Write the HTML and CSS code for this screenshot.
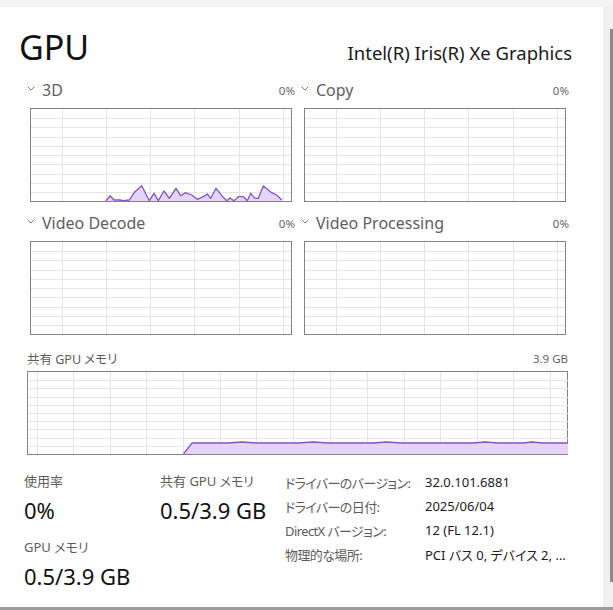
FILE: index.html
```html
<!DOCTYPE html>
<html lang="ja">
<head>
<meta charset="utf-8">
<title>GPU</title>
<link rel="stylesheet" href="styles.css">
</head>
<body>
<svg class="defs" width="0" height="0" aria-hidden="true">
  <defs>
    <g id="grid-small" stroke="#e4e4e4" stroke-width="1" shape-rendering="crispEdges">
      <line x1="0" y1="9.5" x2="260" y2="9.5"/>
      <line x1="0" y1="18.5" x2="260" y2="18.5"/>
      <line x1="0" y1="28.5" x2="260" y2="28.5"/>
      <line x1="0" y1="37.5" x2="260" y2="37.5"/>
      <line x1="0" y1="46.5" x2="260" y2="46.5"/>
      <line x1="0" y1="55.5" x2="260" y2="55.5"/>
      <line x1="0" y1="65.5" x2="260" y2="65.5"/>
      <line x1="0" y1="74.5" x2="260" y2="74.5"/>
      <line x1="0" y1="83.5" x2="260" y2="83.5"/>
      <line x1="31.5" y1="0" x2="31.5" y2="92"/>
      <line x1="75.5" y1="0" x2="75.5" y2="92"/>
      <line x1="119.5" y1="0" x2="119.5" y2="92"/>
      <line x1="163.5" y1="0" x2="163.5" y2="92"/>
      <line x1="208.5" y1="0" x2="208.5" y2="92"/>
      <line x1="252.5" y1="0" x2="252.5" y2="92"/>
    </g>
    <g id="chev">
      <polyline points="0.5,0.5 4,4 7.5,0.5" fill="none" stroke="#7a7a7a" stroke-width="1"/>
    </g>
  </defs>
</svg>

<div class="window">
  <div class="topbar"></div>
  <div class="body">
    <main class="content">
      <header class="header">
        <h1 class="title">GPU</h1>
        <div class="device">Intel(R) Iris(R) Xe Graphics</div>
      </header>

      <section class="engines">
        <div class="engine">
          <div class="engine-head">
            <svg class="chev" width="8" height="5" viewBox="0 0 8 5"><use href="#chev"/></svg>
            <span class="engine-name">3D</span>
            <span class="engine-pct">0%</span>
          </div>
          <div class="chart">
            <svg width="260" height="92" viewBox="0 0 260 92">
              <use href="#grid-small"/>
              <polygon class="area" points="75,92 79,86.7 83,91 89,91 92.3,91.7 98.3,91 104,82.7 110.7,76.7 118.3,91.7 123,84.3 127.3,91.7 133,82 138.3,89.3 145,79.3 149.7,86.7 154.3,83.7 160.7,86 166.3,90.3 172.3,87.7 176.3,85 179.7,89.3 185,79.3 191.7,87.7 195.7,91.7 199,89 203,91.7 207.3,87.7 212.3,87.7 216.3,91.7 219.7,84.3 224,89.3 227.3,89.3 232.3,77 240.7,83.7 245.7,86 250.7,91 251,92"/>
              <polyline class="line" points="75,92 79,86.7 83,91 89,91 92.3,91.7 98.3,91 104,82.7 110.7,76.7 118.3,91.7 123,84.3 127.3,91.7 133,82 138.3,89.3 145,79.3 149.7,86.7 154.3,83.7 160.7,86 166.3,90.3 172.3,87.7 176.3,85 179.7,89.3 185,79.3 191.7,87.7 195.7,91.7 199,89 203,91.7 207.3,87.7 212.3,87.7 216.3,91.7 219.7,84.3 224,89.3 227.3,89.3 232.3,77 240.7,83.7 245.7,86 250.7,91"/>
            </svg>
          </div>
        </div>
        <div class="engine">
          <div class="engine-head">
            <svg class="chev" width="8" height="5" viewBox="0 0 8 5"><use href="#chev"/></svg>
            <span class="engine-name">Copy</span>
            <span class="engine-pct">0%</span>
          </div>
          <div class="chart">
            <svg width="260" height="92" viewBox="0 0 260 92"><use href="#grid-small"/></svg>
          </div>
        </div>
        <div class="engine">
          <div class="engine-head">
            <svg class="chev" width="8" height="5" viewBox="0 0 8 5"><use href="#chev"/></svg>
            <span class="engine-name">Video Decode</span>
            <span class="engine-pct">0%</span>
          </div>
          <div class="chart">
            <svg width="260" height="92" viewBox="0 0 260 92"><use href="#grid-small"/></svg>
          </div>
        </div>
        <div class="engine">
          <div class="engine-head">
            <svg class="chev" width="8" height="5" viewBox="0 0 8 5"><use href="#chev"/></svg>
            <span class="engine-name">Video Processing</span>
            <span class="engine-pct">0%</span>
          </div>
          <div class="chart">
            <svg width="260" height="92" viewBox="0 0 260 92"><use href="#grid-small"/></svg>
          </div>
        </div>
      </section>

      <section class="memory">
        <div class="memory-head">
          <span>共有 GPU メモリ</span>
          <span class="memory-max">3.9 GB</span>
        </div>
        <div class="chart chart-wide">
          <svg width="540" height="82" viewBox="0 0 540 82">
            <g stroke="#e4e4e4" stroke-width="1" shape-rendering="crispEdges">
              <line x1="0" y1="8.5" x2="540" y2="8.5"/>
              <line x1="0" y1="16.5" x2="540" y2="16.5"/>
              <line x1="0" y1="25.5" x2="540" y2="25.5"/>
              <line x1="0" y1="33.5" x2="540" y2="33.5"/>
              <line x1="0" y1="41.5" x2="540" y2="41.5"/>
              <line x1="0" y1="49.5" x2="540" y2="49.5"/>
              <line x1="0" y1="57.5" x2="540" y2="57.5"/>
              <line x1="0" y1="66.5" x2="540" y2="66.5"/>
              <line x1="0" y1="74.5" x2="540" y2="74.5"/>
              <line x1="9.5" y1="0" x2="9.5" y2="82"/>
              <line x1="45.5" y1="0" x2="45.5" y2="82"/>
              <line x1="82.5" y1="0" x2="82.5" y2="82"/>
              <line x1="118.5" y1="0" x2="118.5" y2="82"/>
              <line x1="155.5" y1="0" x2="155.5" y2="82"/>
              <line x1="192.5" y1="0" x2="192.5" y2="82"/>
              <line x1="228.5" y1="0" x2="228.5" y2="82"/>
              <line x1="265.5" y1="0" x2="265.5" y2="82"/>
              <line x1="302.5" y1="0" x2="302.5" y2="82"/>
              <line x1="339.5" y1="0" x2="339.5" y2="82"/>
              <line x1="376.5" y1="0" x2="376.5" y2="82"/>
              <line x1="412.5" y1="0" x2="412.5" y2="82"/>
              <line x1="449.5" y1="0" x2="449.5" y2="82"/>
              <line x1="485.5" y1="0" x2="485.5" y2="82"/>
              <line x1="522.5" y1="0" x2="522.5" y2="82"/>
            </g>
            <polygon class="area" points="155.5,82 164,71 200,71 214,70 228,71 270,71 285,70 300,71 345,71 359,70 373,71 445,71 457,70 470,71 495,71 504,70 515,71 540,71 540,82"/>
            <polyline class="line" points="155.5,82 164,71 200,71 214,70 228,71 270,71 285,70 300,71 345,71 359,70 373,71 445,71 457,70 470,71 495,71 504,70 515,71 540,71"/>
          </svg>
        </div>
      </section>

      <section class="details">
        <div class="stats">
          <div class="stat">
            <div class="stat-label">使用率</div>
            <div class="stat-value">0%</div>
          </div>
          <div class="stat">
            <div class="stat-label">GPU メモリ</div>
            <div class="stat-value">0.5/3.9 GB</div>
          </div>
        </div>
        <div class="stats stats-shared">
          <div class="stat">
            <div class="stat-label">共有 GPU メモリ</div>
            <div class="stat-value">0.5/3.9 GB</div>
          </div>
        </div>
        <dl class="info">
          <dt>ドライバーのバージョン:</dt><dd>32.0.101.6881</dd>
          <dt>ドライバーの日付:</dt><dd>2025/06/04</dd>
          <dt>DirectX バージョン:</dt><dd>12 (FL 12.1)</dd>
          <dt>物理的な場所:</dt><dd>PCI バス 0, デバイス 2, ...</dd>
        </dl>
      </section>
    </main>
    <div class="scrollbar"><div class="thumb"></div></div>
  </div>
  <div class="bottombar"></div>
</div>
</body>
</html>
```

FILE: styles.css
```css
* { box-sizing: border-box; }

html, body {
  margin: 0;
  padding: 0;
  background: #ffffff;
}

body {
  font-family: "Noto Sans", "Noto Sans CJK JP", sans-serif;
  font-feature-settings: "palt";
  color: #1b1b1b;
  width: 613px;
  height: 610px;
  overflow: hidden;
}

.defs {
  position: absolute;
  width: 0;
  height: 0;
}

.window {
  display: flex;
  flex-direction: column;
  height: 610px;
}

.topbar {
  height: 7px;
  background: #f3f3f3;
  flex: none;
}

.body {
  flex: 1;
  display: flex;
  min-height: 0;
}

.content {
  flex: 1;
  padding: 0 34px 0 27px;
}

.scrollbar {
  width: 10px;
  background: #f0f0f0;
  padding: 22px 0 25px 7px;
  flex: none;
}

.thumb {
  height: 100%;
  background: #8a8a8a;
}

.bottombar {
  height: 3px;
  background: #9c9c9c;
  flex: none;
}

/* header */
.header {
  display: flex;
  justify-content: space-between;
  align-items: baseline;
  margin: 0 -3px 0 -8px;
  padding-top: 20px;
  height: 73px;
}

.title {
  margin: 0;
  font-size: 34px;
  font-weight: 400;
  line-height: 40px;
  color: #111;
}

.device {
  font-size: 18.5px;
  color: #1a1a1a;
}

/* engine charts */
.engines {
  display: grid;
  grid-template-columns: 268px 268px;
  column-gap: 6px;
  row-gap: 11px;
}

.engine-head {
  display: flex;
  align-items: center;
  height: 20px;
  margin-bottom: 8px;
}

.chev {
  flex: none;
  margin: 0 7px 3px 0;
}

.engine-name {
  flex: 1;
  font-size: 16px;
  line-height: 20px;
  color: #606060;
}

.engine-pct {
  font-size: 11.5px;
  color: #666;
}

.chart {
  margin: 0 3px;
  height: 94px;
  border: 1px solid #828282;
  background: #fff;
}

.chart svg {
  display: block;
}

.area {
  fill: #e6d4f8;
  stroke: none;
}

.line {
  fill: none;
  stroke: #8553c0;
  stroke-width: 1.3;
  stroke-linejoin: round;
}

/* memory chart */
.memory {
  margin-top: 15px;
  width: 541px;
}

.memory-head {
  display: flex;
  justify-content: space-between;
  align-items: center;
  height: 16px;
  font-size: 12.5px;
  color: #5c5c5c;
  margin-bottom: 5px;
}

.memory-max {
  font-size: 11.5px;
  color: #666;
}

.chart-wide {
  margin: 0;
  height: 84px;
}

/* details */
.details {
  display: flex;
  margin: 17px 0 0 -3px;
}

.stats {
  width: 136px;
  display: flex;
  flex-direction: column;
  gap: 13px;
}

.stats-shared {
  width: 125px;
}

.stat-label {
  font-size: 13px;
  line-height: 18px;
  color: #5c5c5c;
}

.stat-value {
  margin-top: 5px;
  font-size: 22px;
  line-height: 30px;
  color: #111;
}

.info {
  margin: -2px 0 0 0;
  display: grid;
  grid-template-columns: 140px auto;
  grid-auto-rows: 24px;
  align-items: center;
  font-size: 13px;
}

.info dt {
  color: #5c5c5c;
  white-space: nowrap;
  letter-spacing: -0.6px;
}

.info dd {
  margin: 0;
  color: #1b1b1b;
  white-space: nowrap;
}
```
